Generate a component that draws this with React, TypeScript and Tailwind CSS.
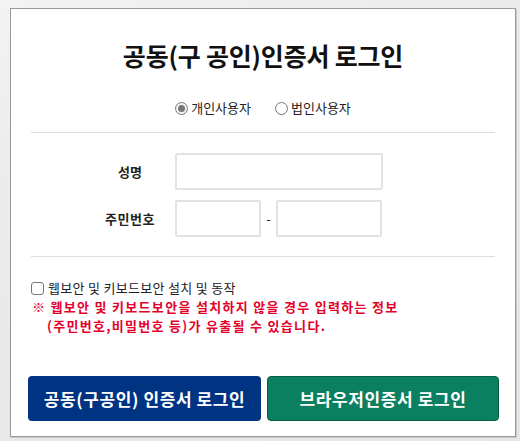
import React from "react";

export default function App() {
  const font = { fontFamily: '"Noto Sans CJK KR", "Noto Sans", sans-serif' };
  return (
    <div
      className="w-[520px] h-[441px] overflow-hidden pt-[8px] pl-[10px] bg-[linear-gradient(160deg,#f3f3f3_0%,#ebebeb_30%,#e6e6e6_100%)]"
      style={font}
    >
      <div className="w-[506px] h-[429px] bg-white border border-[#9a9a9a] shadow-[1px_1px_0_#c8c8c8] flex flex-col">
        <h1 className="mt-[30px] h-[32px] leading-[32px] text-center text-[25px] font-bold text-[#111] tracking-[-0.2px]">
          공동(구 공인)인증서 로그인
        </h1>

        <div className="mt-[27px] h-[20px] flex items-center justify-center gap-[24px] text-[13px] text-[#222]">
          <label className="flex items-center gap-[3px]">
            <span className="w-[13px] h-[13px] rounded-full border border-[#777] bg-[#f4f4f4] flex items-center justify-center">
              <span className="w-[7px] h-[7px] rounded-full bg-[#777]" />
            </span>
            <span>개인사용자</span>
          </label>
          <label className="flex items-center gap-[3px]">
            <span className="w-[13px] h-[13px] rounded-full border border-[#777] bg-white" />
            <span>법인사용자</span>
          </label>
        </div>

        <div className="mt-[14px] mx-[20px] h-px bg-[#dedede]" />

        <div className="mt-[20px] flex items-center h-[37px]">
          <div className="ml-[80px] w-[78px] text-center text-[13px] font-bold text-[#222]">성명</div>
          <div className="ml-[6px] w-[208px] h-[37px] border-2 border-[#e2e2e2] rounded-[2px] bg-white" />
        </div>

        <div className="mt-[10px] flex items-center h-[37px]">
          <div className="ml-[80px] w-[78px] text-center text-[13px] font-bold text-[#222] tracking-[0.5px]">주민번호</div>
          <div className="ml-[6px] w-[86px] h-[37px] border-2 border-[#e2e2e2] rounded-[2px] bg-white" />
          <div className="w-[15px] text-center text-[13px] text-[#222]">-</div>
          <div className="w-[106px] h-[37px] border-2 border-[#e2e2e2] rounded-[2px] bg-white" />
        </div>

        <div className="mt-[19px] mx-[20px] h-px bg-[#dedede]" />

        <div className="mt-[22px] ml-[20px] h-[18px] flex items-center gap-[4px] text-[13px] text-[#222] tracking-[0.3px]">
          <span className="w-[13px] h-[13px] rounded-[3px] border border-[#777] bg-white" />
          <span>웹보안 및 키보드보안 설치 및 동작</span>
        </div>

        <div className="ml-[21px] text-[13px] leading-[19px] font-bold text-[#e4002b] tracking-[1.3px]">
          <div>※ 웹보안 및 키보드보안을 설치하지 않을 경우 입력하는 정보</div>
          <div className="pl-[15px]">(주민번호,비밀번호 등)가 유출될 수 있습니다.</div>
        </div>

        <div className="mt-auto mb-[15px] flex gap-[6px] pl-[17px]">
          <button className="w-[233px] h-[45px] rounded-[4px] bg-[#013383] text-white text-[17px] font-bold tracking-[0.6px]">
            공동(구공인) 인증서 로그인
          </button>
          <button className="w-[232px] h-[45px] rounded-[4px] bg-[#0b8061] border border-[#065a42] text-white text-[17px] font-bold tracking-[0.6px]">
            브라우저인증서 로그인
          </button>
        </div>
      </div>
    </div>
  );
}
